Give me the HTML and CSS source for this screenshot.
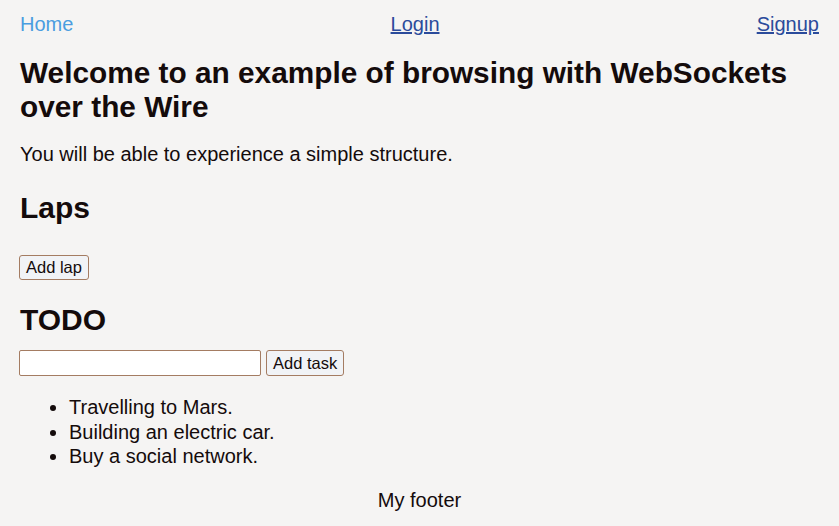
FILE: index.html
```html
<!DOCTYPE html>
<html>
<head>
<meta charset="utf-8">
<link rel="stylesheet" href="styles.css">
</head>
<body>
<nav class="nav">
  <a class="nav-home" href="#">Home</a>
  <a class="nav-link" href="#">Login</a>
  <a class="nav-link" href="#">Signup</a>
</nav>
<main class="main">
  <h1 class="title">Welcome to an example of browsing with WebSockets over the Wire</h1>
  <p class="intro">You will be able to experience a simple structure.</p>
  <h2 class="section">Laps</h2>
  <div class="laps"><button class="btn">Add lap</button></div>
  <h2 class="section todo-title">TODO</h2>
  <div class="todo-form">
    <input class="field" type="text">
    <button class="btn">Add task</button>
  </div>
  <ul class="tasks">
    <li>Travelling to Mars.</li>
    <li>Building an electric car.</li>
    <li>Buy a social network.</li>
  </ul>
</main>
<footer class="footer">My footer</footer>
</body>
</html>
```
FILE: styles.css
```css
html, body {
  margin: 0;
  padding: 0;
  background: #f5f4f3;
}
body {
  font-family: "Liberation Sans", Arial, sans-serif;
  font-size: 20px;
  color: #140b0b;
  padding: 0 20px;
}
.nav {
  display: flex;
  justify-content: space-between;
  padding-top: 13px;
  line-height: 23px;
}
.nav-home {
  color: #4a9de0;
  text-decoration: none;
}
.nav-link {
  color: #2b4b9b;
  text-decoration: underline;
}
.title {
  font-size: 29.8px;
  line-height: 34px;
  margin: 20px 0 0 0;
}
.intro {
  margin: 19px 0 0 0;
  line-height: 23px;
}
.section {
  font-size: 30px;
  line-height: 34px;
  margin: 25px 0 0 0;
}
.laps {
  margin-top: 30px;
  display: flex;
}
.btn {
  font-family: "Liberation Sans", Arial, sans-serif;
  font-size: 16.5px;
  color: #140b0b;
  background: #f1f3f6;
  border: 1px solid #a47c62;
  border-radius: 3px;
  padding: 2px 6px;
  height: 25px;
  margin: 0 0 0 -1px;
  line-height: 19px;
}
.todo-title {
  margin-top: 23px;
}
.todo-form {
  display: flex;
  gap: 5px;
  margin-top: 13px;
}
.field {
  width: 242px;
  height: 26px;
  box-sizing: border-box;
  border: 1px solid #a47c62;
  border-radius: 2px;
  background: #fff;
  margin: 0 0 0 -1px;
  padding: 0 4px;
}
.todo-form .btn {
  height: 26px;
  margin: 0;
}
.tasks {
  margin: 19px 0 0 0;
  padding-left: 49px;
  line-height: 24.5px;
}
.footer {
  text-align: center;
  margin-top: 19px;
  line-height: 24px;
}
```
